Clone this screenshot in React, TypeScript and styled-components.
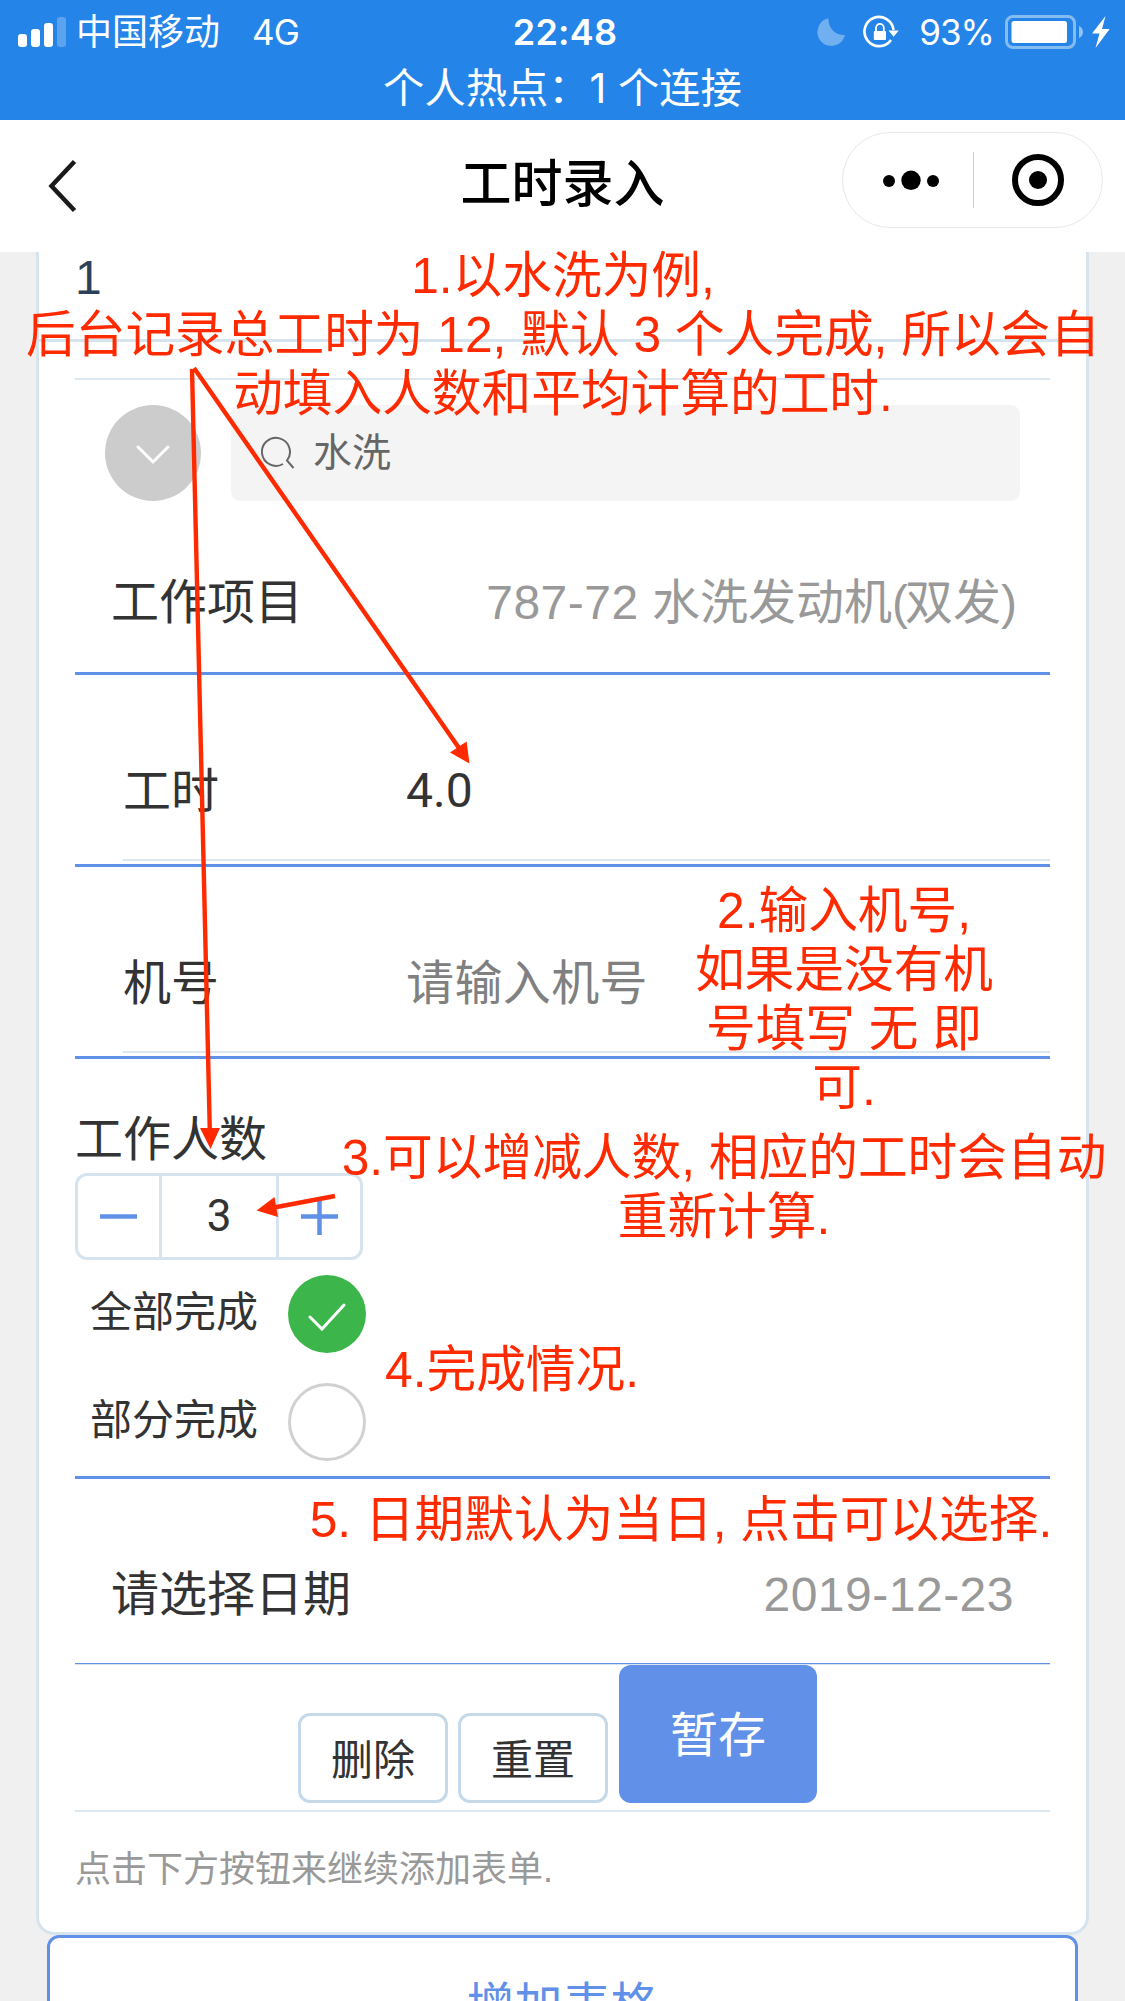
import React from "react";
import styled, { createGlobalStyle } from "styled-components";

const CJK = `"Noto Sans CJK SC", sans-serif`;
const BLUE = "#6190e8";
const PALE = "#d6e4ef";
const RED = "#ff2a00";

const GlobalStyle = createGlobalStyle`
  * { box-sizing: border-box; }
  body { margin: 0; background: #f0f0f0; }
  button { font: inherit; margin: 0; padding: 0; background: none; }
`;

const Screen = styled.div`
  position: relative;
  width: 1125px;
  height: 2001px;
  overflow: hidden;
  display: flex;
  flex-direction: column;
  background: #f0f0f0;
  color: #333;
  font-family: "Liberation Sans", ${CJK};
  font-size: 48px;
  white-space: nowrap;
`;

const StatusBar = styled.header`
  flex: none;
  height: 120px;
  background: #2484e8;
  color: #fff;
  font-family: Inter, ${CJK};
  font-size: 36px;
`;

const StatusRow = styled.div`
  display: grid;
  grid-template-columns: 1fr auto 1fr;
  align-items: center;
  height: 62px;
  padding: 0 15px 0 18px;
  line-height: 62px;
`;

const StatusLeft = styled.div`
  display: flex;
  align-items: center;
`;

const StatusRight = styled.div`
  display: flex;
  align-items: center;
  justify-content: flex-end;
`;

const Carrier = styled.span`
  margin-left: 9px;
  padding-top: 1px;
`;

const Network = styled.span`
  margin-left: 32px;
  font-size: 35px;
  letter-spacing: -1px;
`;

const Clock = styled.span`
  padding-left: 2px;
  font-weight: 600;
  letter-spacing: 0.2px;
`;

const Percent = styled.span`
  margin: 0 11px 0 20px;
  font-size: 35px;
  letter-spacing: -1px;
`;

const Hotspot = styled.div`
  height: 52px;
  line-height: 52px;
  text-align: center;
  font-size: 41.3px;
`;

const NavBar = styled.nav`
  flex: none;
  display: grid;
  grid-template-columns: 1fr auto 1fr;
  align-items: center;
  height: 132px;
  padding: 0 22px;
  background: #fff;
`;

const BackIcon = styled.svg`
  margin-left: 24px;
`;

const NavTitle = styled.h1`
  margin: 0 0 12px;
  color: #000;
  font-family: ${CJK};
  font-size: 51px;
  font-weight: 500;
  line-height: 120px;
`;

const Capsule = styled.div`
  justify-self: end;
  display: flex;
  align-items: center;
  justify-content: space-between;
  width: 261px;
  height: 96px;
  margin-bottom: 12px;
  padding: 0 38px 0 39px;
  border: 1px solid #e8e8e8;
  border-radius: 48px;
`;

const CapsuleDivider = styled.div`
  width: 1px;
  height: 56px;
  margin-right: 5px;
  background: #ccc;
`;

const Body = styled.main`
  flex: 1;
  min-height: 0;
  overflow: hidden;
`;

const Card = styled.section`
  width: 1053px;
  height: 1683px;
  margin: 0 36px;
  background: #fff;
  border: 3px solid ${PALE};
  border-top: 0;
  border-radius: 0 0 18px 18px;
`;

const CardHead = styled.div`
  height: 90px;
  padding: 0 36px;
  border-bottom: 3px solid ${PALE};
  color: #2c405a;
  line-height: 51px;
`;

const CardBody = styled.div`
  margin: 36px 36px 0;
  border-top: 2px solid #dce8f1;
`;

const SearchRow = styled.div`
  display: flex;
  gap: 30px;
  padding: 25px 30px 0;
`;

const RoundButton = styled.button`
  display: grid;
  place-items: center;
  width: 96px;
  height: 96px;
  padding-top: 4px;
  border: 0;
  border-radius: 50%;
  background: #ccc;
`;

const SearchBox = styled.div`
  flex: 1;
  display: flex;
  align-items: center;
  height: 96px;
  padding: 0 30px;
  border-radius: 9px;
  background: #f4f4f4;
  color: #666;
  font-size: 39px;
  line-height: 95px;
`;

const SearchIcon = styled.svg`
  margin-bottom: 2px;
`;

const SearchText = styled.span`
  margin-left: 18px;
  height: 96px;
`;

const PickerRow = styled.div<{ $height: number; $shift: number; $thin?: boolean }>`
  display: flex;
  justify-content: space-between;
  height: ${(p) => p.$height}px;
  padding: ${(p) => p.$shift}px 36px 0;
  border-bottom: ${(p) => (p.$thin ? `1px solid ${BLUE}` : `3px solid ${BLUE}`)};
  line-height: 72px;
`;

const Muted = styled.span`
  color: #999;
`;

const Digits = styled.span`
  letter-spacing: 0.5px;
`;

const Paren = styled.span`
  letter-spacing: -3px;
`;

const FieldRow = styled.div`
  height: 192px;
  padding: 0 0 3px 48px;
  border-bottom: 3px solid ${BLUE};
`;

const Field = styled.label`
  display: grid;
  grid-template-columns: 282px 1fr;
  height: 186px;
  padding-top: 81px;
  border-bottom: 2px solid #dce8f1;
  line-height: 72px;
`;

const FieldValue = styled.span<{ $placeholder?: boolean }>`
  padding-left: 1px;
  color: ${(p) => (p.$placeholder ? "#808080" : "#333")};
  font-family: Roboto, ${CJK};
  line-height: ${(p) => (p.$placeholder ? 72 : 69)}px;
  letter-spacing: ${(p) => (p.$placeholder ? 0.4 : 0)}px;
`;

const CountLabel = styled.div`
  height: 114px;
  padding-top: 45px;
  line-height: 72px;
`;

const Stepper = styled.div`
  display: flex;
  width: 288px;
  height: 87px;
  border: 3px solid ${PALE};
  border-radius: 12px;
`;

const StepButton = styled.button`
  display: grid;
  place-items: center;
  width: 81px;
  border: 0;
`;

const StepValue = styled.div`
  flex: 1;
  border: solid ${PALE};
  border-width: 0 3px;
  text-align: center;
  font-family: Roboto, ${CJK};
  font-size: 44px;
  line-height: 80px;
`;

const Choices = styled.div`
  height: 219px;
  border-bottom: 3px solid ${BLUE};
`;

const Choice = styled.div`
  display: flex;
  align-items: center;
  gap: 30px;
  height: 108px;
  padding-left: 15px;
  font-size: 42px;
  line-height: 106px;
`;

const ChoiceLabel = styled.span`
  height: 108px;
`;

const Radio = styled.span<{ $on?: boolean }>`
  display: grid;
  place-items: center;
  width: 78px;
  height: 78px;
  padding-top: ${(p) => (p.$on ? "5px" : "0")};
  border-radius: 50%;
  background: ${(p) => (p.$on ? "#3cb54a" : "#fff")};
  border: ${(p) => (p.$on ? "0" : "3px solid #d1d1d1")};
`;

const Actions = styled.div`
  display: flex;
  justify-content: center;
  align-items: flex-end;
  gap: 10px;
  height: 148px;
  padding: 0 10px 7px 0;
  border-top: 1px solid ${PALE};
  border-bottom: 2px solid #dce8f1;
`;

const SmallButton = styled.button`
  width: 150px;
  height: 90px;
  padding-top: 6px;
  border: 3px solid #c5d9e8;
  border-radius: 12px;
  color: #333;
  font-size: 42px;
  line-height: 78px;
`;

const SaveButton = styled.button`
  width: 198px;
  height: 138px;
  margin-left: 1px;
  padding-top: 3px;
  border: 0;
  border-radius: 12px;
  background: ${BLUE};
  color: #fff;
  line-height: 132px;
`;

const Hint = styled.p`
  margin: 0;
  padding-top: 31px;
  color: #999;
  font-size: 36px;
  line-height: 54px;
`;

const AddButton = styled.button`
  display: block;
  width: 1031px;
  height: 138px;
  margin: 0 auto;
  padding-top: 3px;
  border: 3px solid ${BLUE};
  border-radius: 12px;
  background: #fff;
  color: ${BLUE};
  font-size: 48px;
  line-height: 129px;
`;

const Note = styled.div<{ $x: number; $y: number; $w: number }>`
  position: absolute;
  left: ${(p) => p.$x}px;
  top: ${(p) => p.$y}px;
  width: ${(p) => p.$w}px;
  display: flex;
  flex-direction: column;
  align-items: center;
  color: ${RED};
  font-size: 49.700px;
  line-height: 59px;
  white-space: pre;
`;

const Arrows = styled.svg`
  position: absolute;
  left: 0;
  top: 0;
  pointer-events: none;
`;

const Signal = () => (
  <svg width="49" height="32" viewBox="0 0 49 32" fill="#fff">
    <rect x="0" y="18" width="9" height="13" rx="3" />
    <rect x="13" y="13" width="9" height="18" rx="3" />
    <rect x="26" y="7" width="9" height="24" rx="3" />
    <rect x="39" y="1" width="9" height="30" rx="3" opacity="0.25" />
  </svg>
);

const StatusIcons = () => (
  <svg width="82" height="36" viewBox="818 12 82 36">
    <path
      d="M829.5 16.2 A14 14 0 1 0 846 33 A15.5 15.5 0 0 1 829.5 16.2Z"
      fill="#fff"
      opacity="0.35"
    />
    <path d="M892 38 A14.6 14.6 0 1 1 894.6 28" fill="none" stroke="#fff" strokeWidth="2.6" />
    <path d="M889.5 28.5H899.8L894.6 34.8Z" fill="#fff" />
    <rect x="874.8" y="29" width="12.2" height="9" rx="1" fill="#fff" />
    <path d="M877 30V25.8a3.9 3.9 0 0 1 7.8 0V30" fill="none" stroke="#fff" strokeWidth="1.8" />
  </svg>
);

const Battery = () => (
  <svg width="105" height="36" viewBox="1005 12 105 36">
    <rect x="1006.5" y="14.5" width="68" height="31" rx="6.5" fill="none" stroke="#fff" strokeOpacity="0.45" strokeWidth="3" />
    <rect x="1011.5" y="19" width="55.5" height="22" rx="2.5" fill="#fff" />
    <path d="M1079 24C1084.300 26 1084.300 34 1079 36Z" fill="#fff" opacity="0.5" />
    <path d="M1105.500 14 1092 31.500H1099.500L1095.500 46 1109.700 27H1102Z" fill="#fff" />
  </svg>
);

export default function App() {
  return (
    <>
      <GlobalStyle />
      <Screen>
        <StatusBar>
          <StatusRow>
            <StatusLeft>
              <Signal />
              <Carrier>中国移动</Carrier>
              <Network>4G</Network>
            </StatusLeft>
            <Clock>22:48</Clock>
            <StatusRight>
              <StatusIcons />
              <Percent>93%</Percent>
              <Battery />
            </StatusRight>
          </StatusRow>
          <Hotspot>个人热点：1 个连接</Hotspot>
        </StatusBar>

        <NavBar>
          <BackIcon width="34" height="56" viewBox="0 0 34 56">
            <path d="M28.500 3.500 5.500 28 28.500 52.500" fill="none" stroke="#1a1a1a" strokeWidth="4.500" />
          </BackIcon>
          <NavTitle>工时录入</NavTitle>
          <Capsule>
            <svg width="58" height="24" viewBox="0 0 58 24">
              <circle cx="7" cy="13" r="6" />
              <circle cx="29" cy="12.300" r="9.700" />
              <circle cx="51" cy="13" r="6" />
            </svg>
            <CapsuleDivider />
            <svg width="52" height="52" viewBox="0 0 52 52">
              <circle cx="26" cy="26" r="23" fill="none" stroke="#000" strokeWidth="6" />
              <circle cx="26" cy="26" r="9" />
            </svg>
          </Capsule>
        </NavBar>

        <Body>
          <Card>
            <CardHead>1</CardHead>
            <CardBody>
              <SearchRow>
                <RoundButton>
                  <svg width="36" height="22" viewBox="0 0 36 22">
                    <path d="M3 3 18 18 33 3" fill="none" stroke="#fff" strokeWidth="3" strokeLinecap="round" />
                  </svg>
                </RoundButton>
                <SearchBox>
                  <SearchIcon width="34" height="34" viewBox="0 0 34 34" fill="none" stroke="#666" strokeWidth="2">
                    <path d="M22 29A14 14 0 1 1 26 25.500L32.500 33" />
                  </SearchIcon>
                  <SearchText>水洗</SearchText>
                </SearchBox>
              </SearchRow>
              <PickerRow $height={174} $shift={66}>
                <span>工作项目</span>
                <Muted>
                  <Digits>787-72</Digits> 水洗发动机<Paren>(</Paren>双发<Paren>)</Paren>
                </Muted>
              </PickerRow>
              <FieldRow>
                <Field>
                  <span>工时</span>
                  <FieldValue>4.0</FieldValue>
                </Field>
              </FieldRow>
              <FieldRow>
                <Field>
                  <span>机号</span>
                  <FieldValue $placeholder>请输入机号</FieldValue>
                </Field>
              </FieldRow>
              <CountLabel>工作人数</CountLabel>
              <Stepper>
                <StepButton>
                  <svg width="37" height="37" viewBox="0 0 37 37" stroke={BLUE} strokeWidth="4.500">
                    <path d="M0 18.500H37" />
                  </svg>
                </StepButton>
                <StepValue>3</StepValue>
                <StepButton>
                  <svg width="37" height="37" viewBox="0 0 37 37" stroke={BLUE} strokeWidth="4.500">
                    <path d="M0 18.500H37M18.500 0V37" />
                  </svg>
                </StepButton>
              </Stepper>
              <Choices>
                <Choice>
                  <ChoiceLabel>全部完成</ChoiceLabel>
                  <Radio $on>
                    <svg width="38" height="28" viewBox="0 0 38 28">
                      <path d="M2 14 14 26 36 2" fill="none" stroke="#fff" strokeWidth="3" strokeLinecap="round" />
                    </svg>
                  </Radio>
                </Choice>
                <Choice>
                  <ChoiceLabel>部分完成</ChoiceLabel>
                  <Radio />
                </Choice>
              </Choices>
              <PickerRow $height={185} $shift={80} $thin>
                <span>请选择日期</span>
                <Muted>
                  <Digits>2019-12-23</Digits>
                </Muted>
              </PickerRow>
              <Actions>
                <SmallButton>删除</SmallButton>
                <SmallButton>重置</SmallButton>
                <SaveButton>暂存</SaveButton>
              </Actions>
              <Hint>点击下方按钮来继续添加表单.</Hint>
            </CardBody>
          </Card>
          <AddButton>增加表格</AddButton>
        </Body>

        <Note $x={22} $y={247} $w={1082}>
          <span>1.以水洗为例,</span>
          <span>后台记录总工时为 12, 默认 3 个人完成, 所以会自</span>
          <span>动填入人数和平均计算的工时.</span>
        </Note>
        <Note $x={691} $y={882} $w={306}>
          <span>2.输入机号,</span>
          <span>如果是没有机</span>
          <span>号填写 无 即</span>
          <span>可.</span>
        </Note>
        <Note $x={339} $y={1129} $w={770}>
          <span>3.可以增减人数, 相应的工时会自动</span>
          <span>重新计算.</span>
        </Note>
        <Note $x={381} $y={1341} $w={262}>
          <span>4.完成情况.</span>
        </Note>
        <Note $x={305} $y={1491} $w={752}>
          <span>5. 日期默认为当日, 点击可以选择.</span>
        </Note>

        <Arrows width="1125" height="2001" viewBox="0 0 1125 2001" fill={RED} stroke={RED}>
          <path d="M194 368 459 748M192 369 209.800 1130M335 1196 274 1207.500" fill="none" strokeWidth="4.400" />
          <path d="M469.500 763.500 450 752.600 466.600 741.600ZM210.500 1149 200 1128 220 1128ZM256.600 1210.500 274.500 1197 278 1217Z" stroke="none" />
        </Arrows>
      </Screen>
    </>
  );
}
